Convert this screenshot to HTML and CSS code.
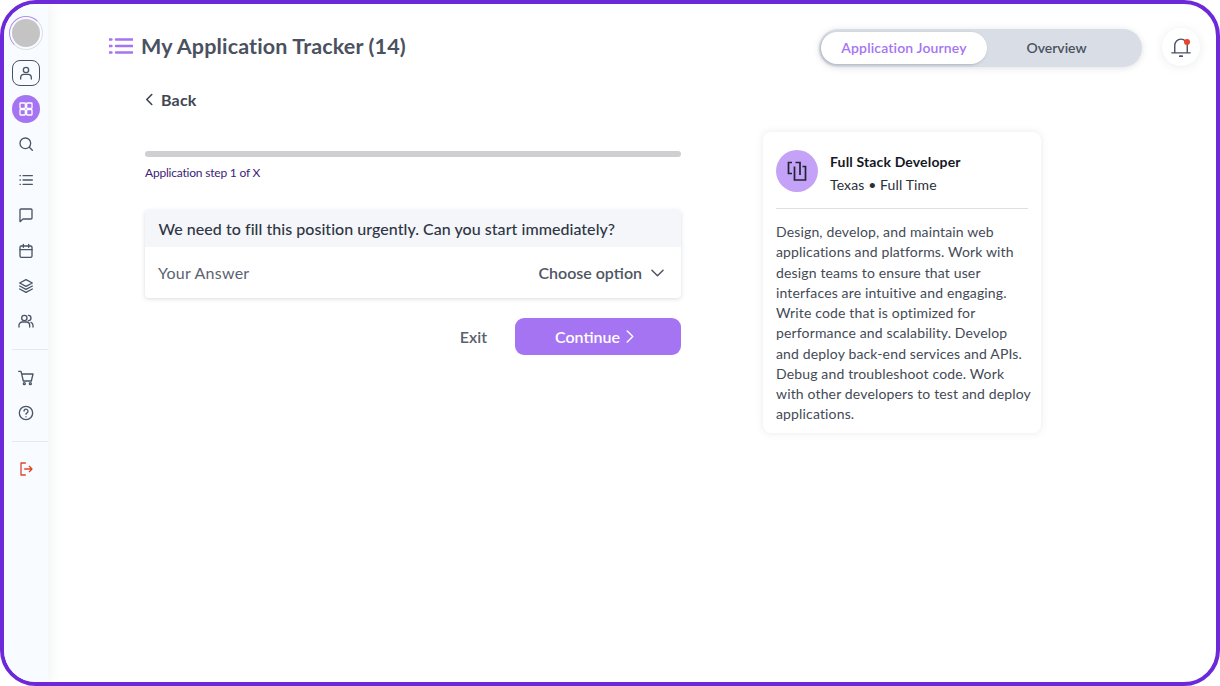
FILE: index.html
```html
<!DOCTYPE html>
<html lang="en">
<head>
<meta charset="utf-8">
<title>My Application Tracker</title>
<link rel="stylesheet" href="styles.css">
</head>
<body>
<div class="frame">
  <nav class="sidebar">
    <div class="avatar-ring"><div class="avatar"></div></div>
    <a class="nav-item nav-profile"><svg viewBox="0 0 24 24" class="ico"><circle cx="12" cy="7.500" r="4"/><path d="M4 21v-2a5 5 0 0 1 5-5h6a5 5 0 0 1 5 5v2"/></svg></a>
    <a class="nav-item nav-active"><svg viewBox="0 0 24 24" class="ico ico-w"><rect x="3" y="3" width="8" height="8" rx="1"/><rect x="13" y="3" width="8" height="8" rx="1"/><rect x="3" y="13" width="8" height="8" rx="1"/><rect x="13" y="13" width="8" height="8" rx="1"/></svg></a>
    <a class="nav-item"><svg viewBox="0 0 24 24" class="ico"><circle cx="11" cy="11" r="8"/><path d="M17 17l4.500 4.500"/></svg></a>
    <a class="nav-item"><svg viewBox="0 0 24 24" class="ico"><path d="M7.500 5.500h14M7.500 12h14M7.500 18.500h14M3 5.500h.6M3 12h.6M3 18.500h.6"/></svg></a>
    <a class="nav-item"><svg viewBox="0 0 24 24" class="ico"><path d="M3 4.500a1.500 1.500 0 0 1 1.500-1.500h15a1.500 1.500 0 0 1 1.500 1.500v12a1.500 1.500 0 0 1-1.500 1.500H7.500L3 22z"/></svg></a>
    <a class="nav-item"><svg viewBox="0 0 24 24" class="ico"><rect x="3" y="4.500" width="18" height="17" rx="2"/><path d="M3 10h18M8 2v4.500M16 2v4.500"/></svg></a>
    <a class="nav-item"><svg viewBox="0 0 24 24" class="ico"><path d="M12 2.500l9.500 5-9.500 5-9.500-5z"/><path d="M2.500 12l9.500 5 9.500-5M2.500 16.500l9.500 5 9.500-5"/></svg></a>
    <a class="nav-item"><svg viewBox="0 0 24 24" class="ico"><circle cx="9.500" cy="7.500" r="4"/><path d="M1.500 21v-2.500a5 5 0 0 1 5-5h6a5 5 0 0 1 5 5V21M15.500 3.500a4 4 0 0 1 0 8M19.500 14a5 5 0 0 1 3 4.500V21"/></svg></a>
    <hr class="nav-rule nav-rule-a">
    <a class="nav-item"><svg viewBox="0 0 24 24" class="ico"><path d="M1 2h3.500l3.500 14.500h12L22.500 6H5.500"/><circle cx="9.500" cy="20.500" r="1.500"/><circle cx="18.500" cy="20.500" r="1.500"/></svg></a>
    <a class="nav-item"><svg viewBox="0 0 24 24" class="ico"><circle cx="12" cy="12" r="10"/><path d="M9 9.200a3 3 0 1 1 4.500 2.700c-1 .6-1.500 1.100-1.500 2.100M12 17.500v.3"/></svg></a>
    <hr class="nav-rule nav-rule-b">
    <a class="nav-item"><svg viewBox="0 0 24 24" class="ico ico-red"><path d="M11 3H4.500v18H11M10 12h11M17 8l4 4-4 4"/></svg></a>
  </nav>

  <div class="main">
    <header class="topbar">
      <div class="title-wrap">
        <svg viewBox="0 0 24 18" class="title-ico"><path d="M7 2.500h17M7 9h17M7 15.500h17M.5 2.500h2M.5 9h2M.5 15.500h2"/></svg>
        <h1 class="title">My Application Tracker (14)</h1>
      </div>
      <div class="top-right">
        <div class="toggle">
          <span class="toggle-on">Application Journey</span>
          <span class="toggle-off">Overview</span>
        </div>
        <div class="bell">
          <svg viewBox="0 0 24 24" class="bell-ico"><path d="M1 19h22M4.500 19V10a7.500 7.500 0 0 1 15 0v9"/><path d="M10.500 23h3" class="bell-clap"/></svg>
          <span class="bell-dot"></span>
        </div>
      </div>
    </header>

    <div class="content">
      <section class="left">
        <a class="back"><svg viewBox="0 0 10 14" class="back-ico"><path d="M7.500 1.500L2 7l5.500 5.500"/></svg>Back</a>
        <div class="progress"></div>
        <p class="step">Application step 1 of X</p>
        <div class="qcard">
          <div class="qhead">We need to fill this position urgently. Can you start immediately?</div>
          <div class="qrow">
            <span class="qlabel">Your Answer</span>
            <span class="qselect">Choose option<svg viewBox="0 0 14 8" class="chev"><path d="M1 1l6 6 6-6"/></svg></span>
          </div>
        </div>
        <div class="actions">
          <a class="exit">Exit</a>
          <a class="continue">Continue<svg viewBox="0 0 8 14" class="cont-ico"><path d="M1 1l6 6-6 6"/></svg></a>
        </div>
      </section>

      <aside class="job">
        <div class="job-head">
          <div class="job-badge"><svg viewBox="0 0 24 24" class="job-ico"><path d="M7 14.500H3.500v-11H7M10.500 3.500H15V16"/><path d="M9.500 7.500V21h11V7.500h-3"/></svg></div>
          <div class="job-meta">
            <div class="job-title">Full Stack Developer</div>
            <div class="job-sub">Texas • Full Time</div>
          </div>
        </div>
        <p class="job-desc">Design, develop, and maintain web applications and platforms. Work with design teams to ensure that user interfaces are intuitive and engaging. Write code that is optimized for performance and scalability. Develop and deploy back-end services and APIs. Debug and troubleshoot code. Work with other developers to test and deploy applications.</p>
      </aside>
    </div>
  </div>
</div>
</body>
</html>
```
FILE: styles.css
```css
* { box-sizing: border-box; }
html, body { margin: 0; height: 100%; background: #fff; }
body { font-family: "Lato", "Open Sans", sans-serif; color: #4a5160; overflow: hidden; }

.frame {
  display: flex;
  width: 1220px;
  height: 686px;
  border: 4px solid #6d28d9;
  border-radius: 36px;
  background: #fff;
  overflow: hidden;
}

/* Sidebar */
.sidebar {
  flex: none;
  width: 44px;
  height: 100%;
  background: #f8fbff;
  box-shadow: 4px 0 10px rgba(90, 100, 120, 0.07);
  display: flex;
  flex-direction: column;
  align-items: center;
  padding-top: 12px;
}
.avatar-ring {
  width: 34px;
  height: 34px;
  flex: none;
  border-radius: 50%;
  border: 1.5px solid #dcdfe4;
  border-left-color: #b48df0;
  border-top-color: #b48df0;
  display: flex;
  align-items: center;
  justify-content: center;
  margin-bottom: 10px;
}
.avatar { width: 28px; height: 28px; border-radius: 50%; background: #c4c4c4; }
.nav-item {
  flex: none;
  width: 28px;
  height: 28px;
  margin-bottom: 7.400px;
  display: flex;
  align-items: center;
  justify-content: center;
}
.nav-profile { height: 26px; border: 1px solid #4a5160; border-radius: 8px; margin-bottom: 9px; }
.nav-active { background: #a574f3; border-radius: 50%; }
.ico { width: 16px; height: 16px; fill: none; stroke: #4a5565; stroke-width: 2; stroke-linecap: round; stroke-linejoin: round; }
.ico-w { stroke: #fff; }
.ico-red { stroke: #e0452a; }
.nav-rule { align-self: flex-end; width: 36px; height: 1px; flex: none; border: 0; margin: 0 0 14px; background: #e6e9ee; }
.nav-rule-a { margin-top: 6px; }
.nav-rule-b { margin-top: 6px; margin-bottom: 13px; }

/* Main */
.main { flex: 1; min-width: 0; display: flex; flex-direction: column; }
.topbar {
  display: flex;
  align-items: center;
  justify-content: space-between;
  height: 38px;
  margin-top: 25px;
  padding: 0 16px 0 61px;
}
.title-wrap { display: flex; align-items: center; gap: 8px; margin-bottom: 4px; }
.title-ico { width: 24px; height: 18px; fill: none; stroke: #a574f3; stroke-width: 2.400; stroke-linecap: round; }
.title { margin: 0; font-size: 21.500px; font-weight: 700; color: #4a5160; line-height: 28px; letter-spacing: 0.140px; }
.top-right { display: flex; align-items: center; gap: 20px; }
.toggle {
  width: 323px;
  height: 38px;
  padding: 3px 0 3px 2px;
  border-radius: 19px;
  background: #d9dee6;
  box-shadow: 0 1px 6px rgba(90, 100, 120, 0.2);
  display: flex;
  align-items: center;
  font-size: 14px;
  font-weight: 600;
}
.toggle-on {
  width: 166px;
  height: 32px;
  padding-bottom: 2px;
  border-radius: 16px;
  background: #fff;
  color: #a574f3;
  letter-spacing: 0.150px;
  box-shadow: -1px 1px 3px rgba(70, 80, 100, 0.3);
  display: flex;
  align-items: center;
  justify-content: center;
}
.toggle-off { flex: 1; text-align: center; color: #4a5160; padding: 0 16px 2px 0; }
.bell {
  position: relative;
  width: 38px;
  height: 38px;
  margin-top: -2px;
  border-radius: 50%;
  background: #fff;
  box-shadow: 0 1px 10px rgba(90, 100, 120, 0.12);
  display: flex;
  align-items: center;
  justify-content: center;
}
.bell-ico { width: 20px; height: 20px; fill: none; stroke: #4a5160; stroke-width: 1.700; stroke-linecap: round; }
.bell-clap { stroke-width: 2; }
.bell-dot { position: absolute; top: 11px; left: 22px; width: 6px; height: 6px; border-radius: 50%; background: #e8452a; }

.content { display: flex; align-items: flex-start; padding: 0 0 0 97px; }
.left { width: 536px; flex: none; }
.back { display: flex; align-items: center; gap: 7px; height: 22px; margin-top: 21px; font-size: 16px; font-weight: 700; color: #3f4653; letter-spacing: 0.200px; }
.back-ico { width: 9px; height: 13px; fill: none; stroke: #3f4653; stroke-width: 1.800; stroke-linecap: round; stroke-linejoin: round; }
.progress { height: 6px; margin-top: 41px; border-radius: 3px; background: #cfcfd1; }
.step { margin: 8px 0 0; font-size: 12px; line-height: 16px; color: #3d2278; letter-spacing: -0.200px; }
.qcard { margin-top: 29px; border-radius: 4px; background: #fff; box-shadow: 0 1px 4px rgba(70, 80, 100, 0.2); overflow: hidden; }
.qhead { height: 37px; padding-left: 13.500px; background: #f4f6fa; color: #2f3542; font-size: 16px; line-height: 37px; font-weight: 500; letter-spacing: 0.040px; }
.qrow { height: 51px; display: flex; align-items: center; justify-content: space-between; padding: 0 17px 0 13px; }
.qlabel { font-size: 16px; color: #5c6370; letter-spacing: 0.250px; }
.qselect { display: flex; align-items: center; gap: 9px; font-size: 16px; font-weight: 600; color: #4f5663; }
.chev { width: 13px; height: 8px; fill: none; stroke: #4f5663; stroke-width: 1.600; stroke-linecap: round; stroke-linejoin: round; }
.actions { display: flex; align-items: center; justify-content: flex-end; gap: 28px; margin-top: 20px; }
.exit { font-size: 16px; font-weight: 600; color: #5a606c; }
.continue {
  width: 166px;
  height: 37px;
  padding-right: 7px;
  border-radius: 9px;
  background: #a574f3;
  color: #fff;
  font-size: 16px;
  font-weight: 600;
  display: flex;
  align-items: center;
  justify-content: center;
  gap: 6px;
}
.cont-ico { width: 8px; height: 13px; fill: none; stroke: #fff; stroke-width: 1.500; stroke-linecap: round; stroke-linejoin: round; }

.job {
  flex: none;
  width: 278px;
  height: 301px;
  margin: 65px 0 0 82px;
  padding: 13px 13px 0;
  border-radius: 8px;
  background: #fff;
  box-shadow: 0 0 7px rgba(90, 100, 120, 0.14);
}
.job-head { display: flex; align-items: center; gap: 12px; height: 64px; padding-bottom: 11px; border-bottom: 1px solid #dedfe2; }
.job-badge { width: 42px; height: 42px; flex: none; border-radius: 50%; background: #c4a2f7; display: flex; align-items: center; justify-content: center; }
.job-ico { width: 24px; height: 24px; fill: none; stroke: #1f2430; stroke-width: 1.700; stroke-linecap: butt; }
.job-meta { margin-top: 4px; }
.job-title { font-size: 14px; font-weight: 700; color: #15181f; line-height: 19px; letter-spacing: 0.150px; }
.job-sub { margin-top: 4px; font-size: 14px; color: #2a2f3a; line-height: 19px; letter-spacing: 0.120px; }
.job-desc { margin: 13px -4px 0 0; font-size: 14px; line-height: 20.250px; color: #444a56; letter-spacing: 0.150px; }
```
